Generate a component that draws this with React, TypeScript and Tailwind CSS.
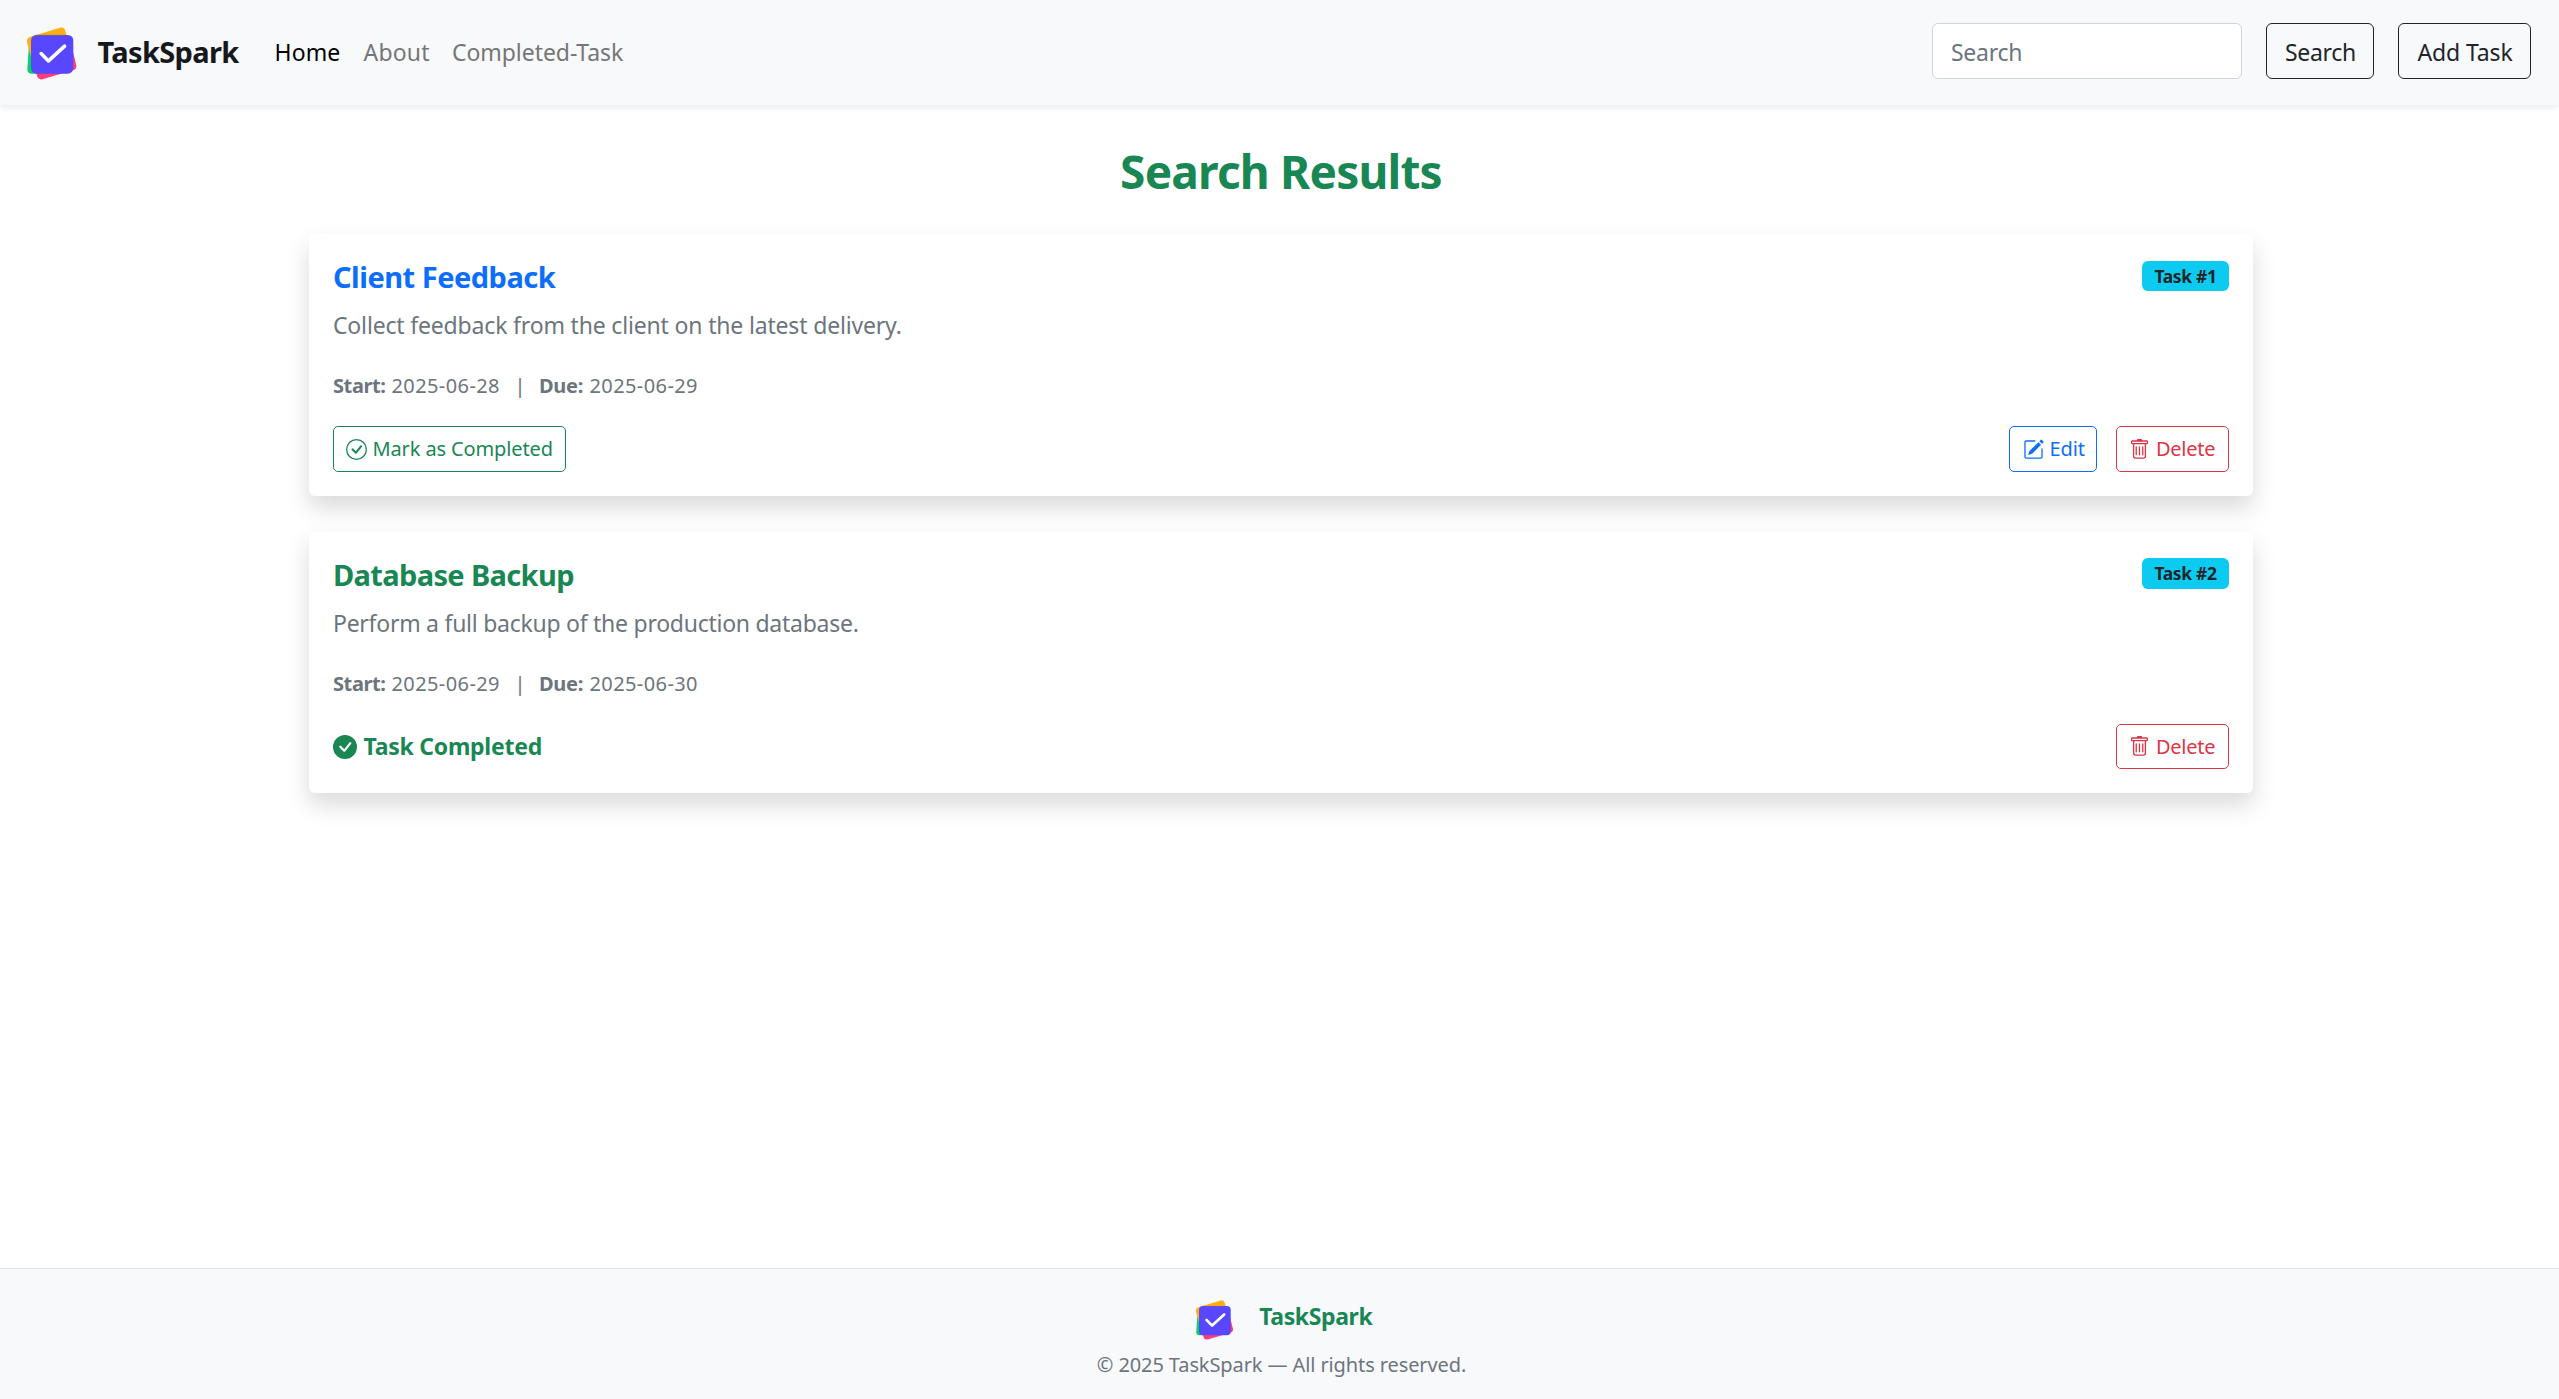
import { BsCheckCircle, BsCheckCircleFill, BsPencilSquare, BsTrash } from "react-icons/bs";

type Task = {
  id: number;
  title: string;
  description: string;
  start: string;
  due: string;
  done: boolean;
};

const tasks: Task[] = [
  {
    id: 1,
    title: "Client Feedback",
    description: "Collect feedback from the client on the latest delivery.",
    start: "2025-06-28",
    due: "2025-06-29",
    done: false,
  },
  {
    id: 2,
    title: "Database Backup",
    description: "Perform a full backup of the production database.",
    start: "2025-06-29",
    due: "2025-06-30",
    done: true,
  },
];

function Logo({ className }: { className: string }) {
  return (
    <svg className={className} viewBox="24 35 149 158" preserveAspectRatio="none" aria-hidden="true">
      <path d="M24 80Q22 68 34 64L122 37Q134 34 138 46L144 66L60 120L36 130Z" fill="#ffb010" />
      <path d="M29 98L25 162Q25 173 36 174L70 174L60 98L36 124Z" fill="#08d265" />
      <path d="M50 168L55 184Q59 193 70 191L162 164Q172 160 171 150L160 105Z" fill="#ff3d78" />
      <rect x="36" y="59" width="126" height="115" rx="16" fill="#5847ff" />
      <path d="M48 59.5H139" stroke="#86706f" strokeWidth="2.5" opacity="0.7" />
      <path
        d="M66 114L88 136L136 92"
        fill="none"
        stroke="#fff"
        strokeWidth="10.5"
        strokeLinecap="round"
        strokeLinejoin="round"
      />
    </svg>
  );
}

function Header() {
  return (
    <header className="flex h-[105px] shrink-0 items-start bg-[#f8f9fb] pt-[23px] pr-7 pl-[27px] shadow-[0_3px_6px_rgba(0,0,0,0.075)]">
      <div className="flex h-[57px] items-center">
        <Logo className="mt-[3px] h-[53px] w-[50px]" />
        <span className="ml-[20.5px] w-[177px] text-[29px] leading-[57px] font-bold tracking-[-0.65px] text-[#16181b]">
          TaskSpark
        </span>
      </div>
      <nav className="flex text-[23px] leading-[58px] text-[#757676]">
        <a className="w-[89px] tracking-[0.1px] text-black">Home</a>
        <a className="w-[88.5px] tracking-[0.2px]">About</a>
        <a className="tracking-[-0.06px]">Completed-Task</a>
      </nav>
      <div className="ml-auto flex gap-6 text-[23px] text-[#212529]">
        <input
          className="h-14 w-[310px] rounded-md border border-[#ced4da] bg-white pr-[17px] pl-[18px] pt-0.5 tracking-[-0.26px] outline-none placeholder:text-[#6c757d]"
          placeholder="Search"
        />
        <button className="h-14 w-[108px] rounded-md border border-[#212529] pt-0.5 pl-px tracking-[-0.3px]">
          Search
        </button>
        <button className="h-14 w-[133px] rounded-md border border-[#212529] pt-0.5 pl-px tracking-[-0.12px]">
          Add Task
        </button>
      </div>
    </header>
  );
}

function TaskCard({ task }: { task: Task }) {
  return (
    <article
      className={`rounded-md bg-white p-6 shadow-[0_12px_24px_rgba(0,0,0,0.15)] ${task.done ? "h-[261px]" : "h-[262px]"}`}
    >
      <div className="flex h-9 items-start justify-between">
        <h2
          className={`text-[29px] leading-[38px] font-bold ${
            task.done ? "tracking-[-0.64px] text-[#198754]" : "tracking-[-0.5px] text-[#0d6efd]"
          }`}
        >
          {task.title}
        </h2>
        <span
          className={`w-[87px] rounded-md bg-[#0dcaf0] text-center text-[17.5px] font-bold tracking-[-0.36px] text-[#212529] ${
            task.done ? "mt-0.5 h-[31px] leading-[31px]" : "mt-[3px] h-[30px] leading-[30px]"
          }`}
        >
          Task #{task.id}
        </span>
      </div>
      <p
        className={`mt-3 h-9 text-[23px] leading-[38px] text-[#6c757d] ${
          task.done ? "tracking-[-0.26px]" : "tracking-[-0.17px]"
        }`}
      >
        {task.description}
      </p>
      <div className="mt-7 flex h-8 text-[20px] leading-8 tracking-[0.4px] text-[#6c757d]">
        <b className="w-[58.5px] font-bold tracking-[-0.4px]">Start:</b>
        <span className="w-[123px]">{task.start}</span>
        <span className="w-[24.5px]">|</span>
        <b className="w-[50.5px] font-bold tracking-[-0.3px]">Due:</b>
        <span>{task.due}</span>
      </div>
      <div className={`mt-6 flex items-stretch text-[20px] ${task.done ? "h-[45px]" : "h-[46px]"}`}>
        {task.done ? (
          <span className="flex items-center gap-[6.5px] text-[23px] font-bold tracking-[-0.25px] text-[#198754]">
            <BsCheckCircleFill className="size-6" />
            Task Completed
          </span>
        ) : (
          <button className="flex w-[233px] items-center gap-1.5 rounded-[5px] border border-[#198754] pl-[11.5px] tracking-[-0.12px] whitespace-nowrap text-[#198754]">
            <BsCheckCircle className="size-[21px] shrink-0" />
            Mark as Completed
          </button>
        )}
        <div className="ml-auto flex gap-[19px]">
          {!task.done && (
            <button className="flex w-[88px] items-center gap-1.5 rounded-[5px] border border-[#0d6efd] pl-[12.5px] tracking-[-0.1px] text-[#0d6efd]">
              <BsPencilSquare className="size-[21px] shrink-0" />
              Edit
            </button>
          )}
          <button className="flex w-[113px] items-center gap-1.5 rounded-[5px] border border-[#dc3545] pl-3 tracking-[-0.27px] text-[#dc3545]">
            <BsTrash className="size-[21px] shrink-0" />
            Delete
          </button>
        </div>
      </div>
    </article>
  );
}

function Footer() {
  return (
    <footer className="flex h-[131px] shrink-0 flex-col items-center border-t border-[#dee2e6] bg-[#f8f9fb] pt-[31px]">
      <div className="flex h-[41px] items-start gap-[26px] pl-[9px]">
        <Logo className="h-10 w-[37.5px]" />
        <span className="text-[23px] leading-8 font-bold tracking-[-0.38px] text-[#198754]">TaskSpark</span>
      </div>
      <p className="mt-2 pl-1 text-[20px] leading-8 tracking-[-0.1px] text-[#6c757d]">
        © 2025 TaskSpark — All rights reserved.
      </p>
    </footer>
  );
}

export default function App() {
  return (
    <div className="flex h-[1399px] flex-col bg-white font-['Noto_Sans',sans-serif]">
      <Header />
      <main className="ml-[309px] flex w-[1944px] grow flex-col pt-[37px]">
        <h1 className="mb-[34px] text-center text-[46px] leading-[58px] font-bold tracking-[-0.8px] text-[#198754]">
          Search Results
        </h1>
        <div className="flex flex-col gap-9">
          {tasks.map((task) => (
            <TaskCard key={task.id} task={task} />
          ))}
        </div>
      </main>
      <Footer />
    </div>
  );
}
